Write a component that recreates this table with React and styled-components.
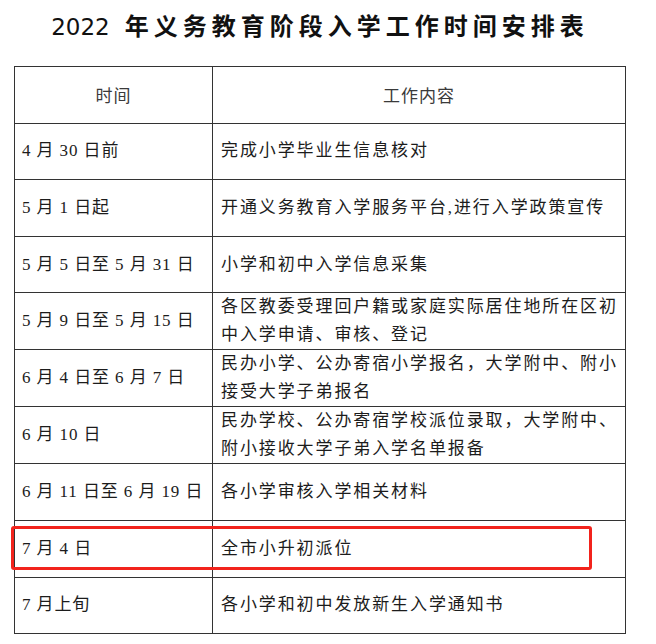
import React from "react";
import styled, { createGlobalStyle } from "styled-components";

const GlobalStyle = createGlobalStyle`
  html, body { margin: 0; padding: 0; background: #ffffff; }
  body { font-family: "Noto Sans CJK SC", "Noto Sans", sans-serif; }
`;

const Page = styled.div`
  width: 656px;
  height: 644px;
  background: #fff;
  overflow: hidden;
`;

const Title = styled.h1`
  margin: 0 0 0 14px;
  width: 612px;
  height: 66px;
  padding-top: 9px;
  box-sizing: border-box;
  text-align: center;
  font-family: "Noto Sans CJK SC", sans-serif;
  font-weight: 700;
  font-size: 24px;
  line-height: 32px;
  letter-spacing: 5px;
  color: #111;
  white-space: nowrap;
`;

const Year = styled.span`
  font-family: "DejaVu Sans", sans-serif;
  font-weight: 400;
  font-size: 23px;
  letter-spacing: 0;
  margin-right: 15px;
`;

const TableWrap = styled.div`
  position: relative;
  margin-left: 14px;
  width: 612px;
`;

const Table = styled.table`
  width: 612px;
  border-collapse: collapse;
  table-layout: fixed;
`;

const Row = styled.tr`
  height: 56.6px;
`;

const Cell = styled.td`
  border: 1px solid #333;
  padding: 0 0 0 ${(p) => (p.$wide ? 8 : 7)}px;
  vertical-align: middle;
  font-family: "Liberation Serif", "Noto Sans CJK SC", serif;
  font-size: 17px;
  line-height: 28px;
  letter-spacing: ${(p) => (p.$wide ? "1.9px" : "0.9px")};
  color: #1c1c1c;
  white-space: nowrap;
  overflow: hidden;
`;

const HeadCell = styled.th`
  border: 1px solid #333;
  padding: 0;
  text-align: center;
  vertical-align: middle;
  font-family: "Noto Sans CJK SC", sans-serif;
  font-weight: 400;
  font-size: 17px;
  letter-spacing: 1px;
  color: #3a3a3a;
  width: ${(p) => p.$w || "auto"};
`;

const Highlight = styled.div`
  position: absolute;
  left: -3px;
  top: ${(p) => p.$top}px;
  width: 581px;
  height: 44px;
  box-sizing: border-box;
  border: 3px solid #f2231c;
  border-radius: 3px;
  pointer-events: none;
`;

const rows = [
  ["4 月 30 日前", ["完成小学毕业生信息核对"]],
  ["5 月 1 日起", ["开通义务教育入学服务平台,进行入学政策宣传"]],
  ["5 月 5 日至 5 月 31 日", ["小学和初中入学信息采集"]],
  ["5 月 9 日至 5 月 15 日", ["各区教委受理回户籍或家庭实际居住地所在区初", "中入学申请、审核、登记"]],
  ["6 月 4 日至 6 月 7 日", ["民办小学、公办寄宿小学报名，大学附中、附小", "接受大学子弟报名"]],
  ["6 月 10 日", ["民办学校、公办寄宿学校派位录取，大学附中、", "附小接收大学子弟入学名单报备"]],
  ["6 月 11 日至 6 月 19 日", ["各小学审核入学相关材料"]],
  ["7 月 4 日", ["全市小升初派位"]],
  ["7 月上旬", ["各小学和初中发放新生入学通知书"]],
];

const ROW_H = 56.6;
const HIGHLIGHT_INDEX = 7;

export default function App() {
  return (
    <Page>
      <GlobalStyle />
      <Title>
        <Year>2022</Year>年义务教育阶段入学工作时间安排表
      </Title>
      <TableWrap>
        <Table>
          <thead>
            <Row>
              <HeadCell $w="197px">时间</HeadCell>
              <HeadCell>工作内容</HeadCell>
            </Row>
          </thead>
          <tbody>
            {rows.map(([date, lines], i) => (
              <Row key={i}>
                <Cell>{date}</Cell>
                <Cell $wide>
                  {lines.map((l, j) => (
                    <React.Fragment key={j}>
                      {j > 0 && <br />}
                      {l}
                    </React.Fragment>
                  ))}
                </Cell>
              </Row>
            ))}
          </tbody>
        </Table>
        <Highlight $top={Math.round((HIGHLIGHT_INDEX + 1) * ROW_H + 7)} />
      </TableWrap>
    </Page>
  );
}
